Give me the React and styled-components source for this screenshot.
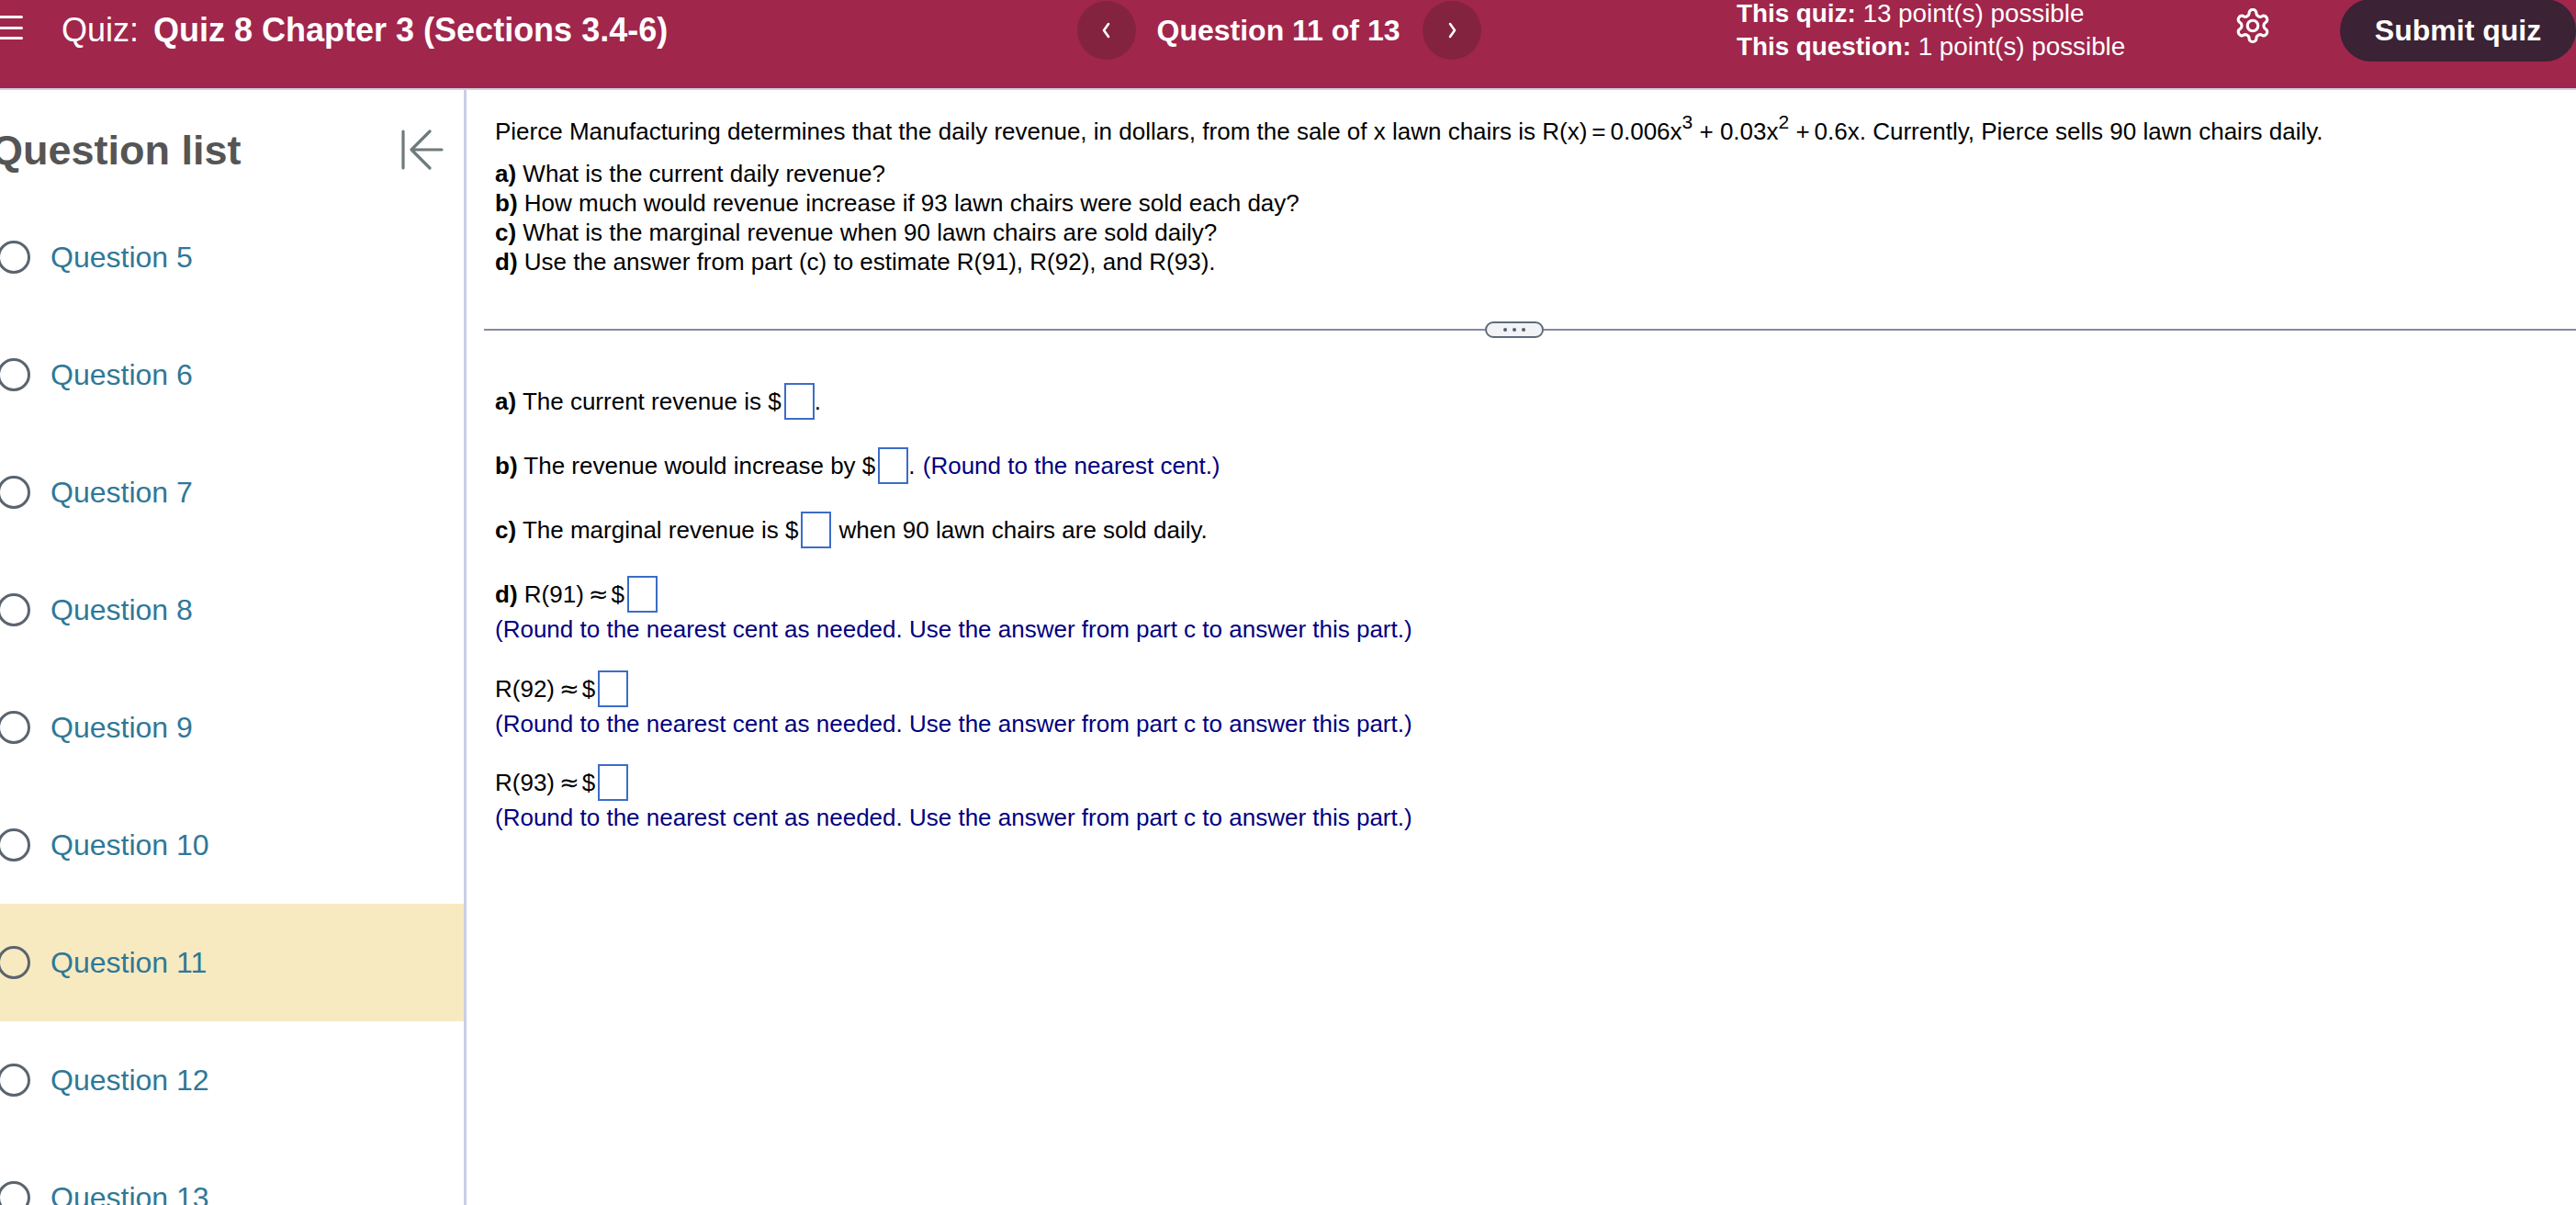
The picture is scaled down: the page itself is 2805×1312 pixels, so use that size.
import React from "react";
import styled, { createGlobalStyle } from "styled-components";

const Global = createGlobalStyle`
  html, body { margin: 0; padding: 0; background: #fff; }
  body { font-family: "Liberation Sans", Arial, sans-serif; overflow: hidden; }
`;

const Page = styled.div`
  width: 2805px; height: 1312px; overflow: hidden; display: flex; flex-direction: column;
  background: #fff;
`;
const Header = styled.header`
  height: 96px; flex: none; background: #a0264c; border-bottom: 2px solid #cdd3de; color: #fff;
  display: flex; align-items: flex-start;
`;
const HeaderRow = styled.div`
  height: 66px; display: flex; align-items: center; width: 100%;
`;
const Burger = styled.div`
  width: 30px; margin: -6px 0 0 -5px; flex: none; height: 26px; display: flex; flex-direction: column; justify-content: space-between;
  span { display: block; height: 3px; border-radius: 2px; background: #fff; }
`;
const QuizTitle = styled.div`
  margin-left: 42px; width: 1106px; flex: none; font-size: 36px; white-space: nowrap;
  b { margin-left: 6px; }
`;
const Nav = styled.div`
  display: flex; align-items: center; flex: none;
`;
const NavButton = styled.div`
  width: 64px; height: 64px; border-radius: 50%; background: #84233f; flex: none;
  display: flex; align-items: center; justify-content: center;
`;
const NavLabel = styled.div`
  font-size: 32px; font-weight: bold; width: 312px; padding-right: 2px; box-sizing: border-box; text-align: center; white-space: nowrap;
`;
const Points = styled.div`
  font-size: 27.8px; line-height: 36px; white-space: nowrap; margin-left: 278px; flex: none;
`;
const Grow = styled.div`
  flex: 1;
`;
const Gear = styled.div`
  flex: none; margin-top: -10px; width: 42px; height: 42px;
`;
const Submit = styled.div`
  flex: none; width: 257px; height: 68px; border-radius: 34px; background: #3b2234; margin-left: 74px;
  display: flex; align-items: center; justify-content: center; font-size: 32px; font-weight: bold;
`;
const Body = styled.div`
  display: flex; flex: 1; min-height: 0;
`;
const Sidebar = styled.aside`
  width: 505px; flex: none; border-right: 3px solid #c9cfe3; display: flex; flex-direction: column;
`;
const SideHead = styled.div`
  height: 118px; flex: none; display: flex; align-items: center; justify-content: space-between; padding-right: 22px;
  padding-top: 11px; box-sizing: border-box;
`;
const SideTitle = styled.h2`
  margin: 2px 0 0 -10px; font-size: 45px; font-weight: bold; color: #555; white-space: nowrap;
`;
const Row = styled.div`
  height: 128px; flex: none; display: flex; align-items: center; background: ${p => (p.$active ? "#f7eac0" : "transparent")};
`;
const Radio = styled.span`
  width: 36px; height: 36px; box-sizing: border-box; border: 3.5px solid #5a646e; border-radius: 50%; margin-left: -3px; flex: none;
`;
const RowLabel = styled.span`
  margin-left: 22px; font-size: 32px; color: #2f7898;
`;
const Main = styled.main`
  flex: 1; min-width: 0; padding: 29px 0 0 31px; font-size: 26px; line-height: 32px; color: #000;
`;
const Para = styled.p`
  margin: 0 0 14px; white-space: nowrap;
`;
const Equals = styled.span`
  margin: 0 5px;
`;
const Plus = styled.span`
  margin-right: 5px;
`;
const Sup = styled.sup`
  font-size: 21px; line-height: 0; vertical-align: 12px;
`;
const Parts = styled.div`
  white-space: nowrap;
`;
const Rule = styled.div`
  display: flex; align-items: center; margin: 49px 0 49px -12px; height: 18px;
`;
const RuleLine = styled.div`
  height: 2px; background: #858b9e;
  ${p => (p.$w ? `width: ${p.$w}px; flex: none;` : "flex: 1;")}
`;
const Handle = styled.div`
  flex: none; width: 64px; height: 18px; box-sizing: border-box; border: 2px solid #5f6b7a; border-radius: 9px; background: #f1f3f6;
  display: flex; align-items: center; justify-content: center; gap: 6px;
  i { width: 4px; height: 4px; border-radius: 50%; background: #555f6b; display: block; }
`;
const Answers = styled.div`
  display: flex; flex-direction: column; gap: 30px;
`;
const Group = styled.div``;
const Line = styled.div`
  height: 40px; display: flex; align-items: center; white-space: pre;
`;
const Box = styled.span`
  width: 33px; height: 40px; box-sizing: border-box; border: 2px solid #3d6cc8; background: #fff; flex: none;
  margin: 0 ${p => p.$r || 0}px 0 3px;
`;
const Approx = styled.span`
  font-family: "DejaVu Sans", sans-serif; font-size: 26px; margin: 0 3px 0 5px;
`;
const Hint = styled.div`
  color: #00007f; line-height: 32px; white-space: nowrap; margin: 2px 0 -1.5px;
`;
const HintInline = styled.span`
  color: #00007f; margin-left: 1px;
`;

const Chevron = ({ d }) => (
  <svg width="16" height="20" viewBox="0 0 16 20" fill="none" stroke="#fff" strokeWidth="2.6" strokeLinecap="round" strokeLinejoin="round">
    <path d={d} />
  </svg>
);
const GearIcon = () => (
  <svg width="42" height="42" viewBox="0 0 24 24" fill="none" stroke="#fff" strokeWidth="1.8" strokeLinecap="round" strokeLinejoin="round">
    <path d="M12.22 2h-.44a2 2 0 0 0-2 2v.18a2 2 0 0 1-1 1.73l-.43.25a2 2 0 0 1-2 0l-.15-.08a2 2 0 0 0-2.73.73l-.22.38a2 2 0 0 0 .73 2.73l.15.1a2 2 0 0 1 1 1.72v.51a2 2 0 0 1-1 1.74l-.15.09a2 2 0 0 0-.73 2.73l.22.38a2 2 0 0 0 2.73.73l.15-.08a2 2 0 0 1 2 0l.43.25a2 2 0 0 1 1 1.73V20a2 2 0 0 0 2 2h.44a2 2 0 0 0 2-2v-.18a2 2 0 0 1 1-1.73l.43-.25a2 2 0 0 1 2 0l.15.08a2 2 0 0 0 2.73-.73l.22-.39a2 2 0 0 0-.73-2.73l-.15-.08a2 2 0 0 1-1-1.74v-.5a2 2 0 0 1 1-1.74l.15-.09a2 2 0 0 0 .73-2.73l-.22-.38a2 2 0 0 0-2.73-.73l-.15.08a2 2 0 0 1-2 0l-.43-.25a2 2 0 0 1-1-1.73V4a2 2 0 0 0-2-2z" />
    <circle cx="12" cy="12" r="3.3" />
  </svg>
);
const CollapseIcon = () => (
  <svg width="46" height="44" viewBox="0 0 46 44" fill="none" stroke="#6f7a7c" strokeWidth="3.2" strokeLinecap="round" strokeLinejoin="round">
    <path d="M2 2v40M31 2L11 22l20 20M11 22h33" />
  </svg>
);

const questions = [5, 6, 7, 8, 9, 10, 11, 12, 13];
const hint = "(Round to the nearest cent as needed. Use the answer from part c to answer this part.)";

export default function App() {
  return (
    <Page>
      <Global />
      <Header>
        <HeaderRow>
          <Burger><span /><span /><span /></Burger>
          <QuizTitle>Quiz: <b>Quiz 8 Chapter 3 (Sections 3.4-6)</b></QuizTitle>
          <Nav>
            <NavButton><Chevron d="M10 3L5 10l5 7" /></NavButton>
            <NavLabel>Question 11 of 13</NavLabel>
            <NavButton><Chevron d="M6 3l5 7-5 7" /></NavButton>
          </Nav>
          <Points>
            <div><b>This quiz:</b> 13 point(s) possible</div>
            <div><b>This question:</b> 1 point(s) possible</div>
          </Points>
          <Grow />
          <Gear><GearIcon /></Gear>
          <Submit>Submit quiz</Submit>
        </HeaderRow>
      </Header>
      <Body>
        <Sidebar>
          <SideHead>
            <SideTitle>Question list</SideTitle>
            <CollapseIcon />
          </SideHead>
          {questions.map(n => (
            <Row key={n} $active={n === 11}>
              <Radio />
              <RowLabel>Question {n}</RowLabel>
            </Row>
          ))}
        </Sidebar>
        <Main>
          <Para>
            Pierce Manufacturing determines that the daily revenue, in dollars, from the sale of x lawn chairs is R(x)<Equals>=</Equals>0.006x<Sup>3</Sup> + 0.03x<Sup>2</Sup> <Plus>+</Plus>0.6x. Currently, Pierce sells 90 lawn chairs daily.
          </Para>
          <Parts>
            <div><b>a)</b> What is the current daily revenue?</div>
            <div><b>b)</b> How much would revenue increase if 93 lawn chairs were sold each day?</div>
            <div><b>c)</b> What is the marginal revenue when 90 lawn chairs are sold daily?</div>
            <div><b>d)</b> Use the answer from part (c) to estimate R(91), R(92), and R(93).</div>
          </Parts>
          <Rule>
            <RuleLine $w={1090} />
            <Handle><i /><i /><i /></Handle>
            <RuleLine />
          </Rule>
          <Answers>
            <Line><b>a)</b> The current revenue is $<Box />.</Line>
            <Line><b>b)</b> The revenue would increase by $<Box />. <HintInline>(Round to the nearest cent.)</HintInline></Line>
            <Line><b>c)</b> The marginal revenue is $<Box $r={8} />when 90 lawn chairs are sold daily.</Line>
            <Group>
              <Line><b>d)</b> R(91)<Approx>≈</Approx>$<Box /></Line>
              <Hint>{hint}</Hint>
            </Group>
            <Group>
              <Line>R(92)<Approx>≈</Approx>$<Box /></Line>
              <Hint>{hint}</Hint>
            </Group>
            <Group>
              <Line>R(93)<Approx>≈</Approx>$<Box /></Line>
              <Hint>{hint}</Hint>
            </Group>
          </Answers>
        </Main>
      </Body>
    </Page>
  );
}
